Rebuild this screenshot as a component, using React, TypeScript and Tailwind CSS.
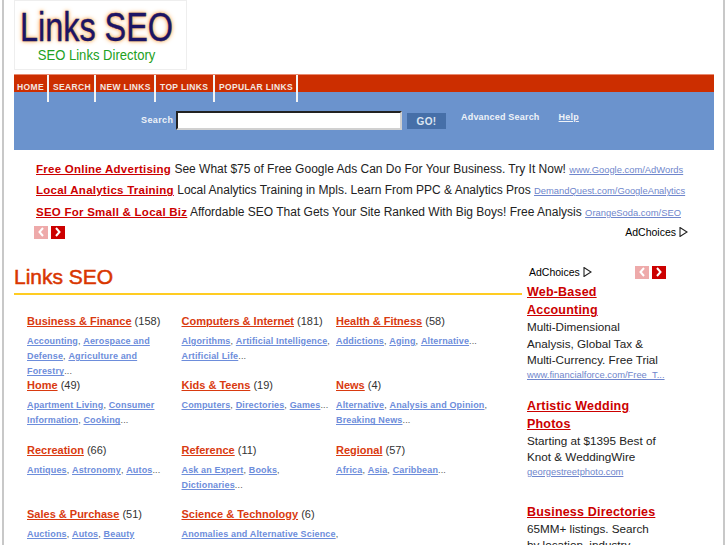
import React from "react";

const sans = { fontFamily: '"Liberation Sans", Arial, sans-serif' };

const nav = [
  ["HOME", "w-[35px]"],
  ["SEARCH", "w-[47px]"],
  ["NEW LINKS", "w-[60px]"],
  ["TOP LINKS", "w-[59px]"],
  ["POPULAR LINKS", "w-[83px]"],
];

const topAds = [
  ["Free Online Advertising", "See What $75 of Free Google Ads Can Do For Your Business. Try It Now!", "www.Google.com/AdWords"],
  ["Local Analytics Training", "Local Analytics Training in Mpls. Learn From PPC & Analytics Pros", "DemandQuest.com/GoogleAnalytics"],
  ["SEO For Small & Local Biz", "Affordable SEO That Gets Your Site Ranked With Big Boys! Free Analysis", "OrangeSoda.com/SEO"],
];

const cats: [string, string, string[][]][] = [
  ["Business & Finance", "(158)", [["Accounting", ", "], ["Aerospace and Defense", ", "], ["Agriculture and Forestry", "..."]]],
  ["Computers & Internet", "(181)", [["Algorithms", ", "], ["Artificial Intelligence", ", "], ["Artificial Life", "..."]]],
  ["Health & Fitness", "(58)", [["Addictions", ", "], ["Aging", ", "], ["Alternative", "..."]]],
  ["Home", "(49)", [["Apartment Living", ", "], ["Consumer Information", ", "], ["Cooking", "..."]]],
  ["Kids & Teens", "(19)", [["Computers", ", "], ["Directories", ", "], ["Games", "..."]]],
  ["News", "(4)", [["Alternative", ", "], ["Analysis and Opinion", ", "], ["Breaking News", "..."]]],
  ["Recreation", "(66)", [["Antiques", ", "], ["Astronomy", ", "], ["Autos", "..."]]],
  ["Reference", "(11)", [["Ask an Expert", ", "], ["Books", ", "], ["Dictionaries", "..."]]],
  ["Regional", "(57)", [["Africa", ", "], ["Asia", ", "], ["Caribbean", "..."]]],
  ["Sales & Purchase", "(51)", [["Auctions", ", "], ["Autos", ", "], ["Beauty", ""]]],
  ["Science & Technology", "(6)", [["Anomalies and Alternative Science", ","]]],
];

function Arrows() {
  return (
    <div className="flex gap-[3px]">
      <span className="flex h-[13px] w-[14px] items-center justify-center bg-[#eeaaaa]">
        <svg width="8" height="10" viewBox="0 0 8 10"><path d="M6 1 2.5 5 6 9" fill="none" stroke="#fff" strokeWidth="2" /></svg>
      </span>
      <span className="flex h-[13px] w-[14px] items-center justify-center bg-[#cc0000]">
        <svg width="8" height="10" viewBox="0 0 8 10"><path d="M2 1 5.5 5 2 9" fill="none" stroke="#fff" strokeWidth="2" /></svg>
      </span>
    </div>
  );
}

function AdChoices() {
  return (
    <span className="flex items-center gap-[3px] text-[10.5px] leading-[12px] text-black">
      AdChoices
      <svg width="9" height="10" viewBox="0 0 9 10"><path d="M1 .5V9.5L8 5Z" fill="none" stroke="#222" strokeWidth="1.1" /></svg>
    </span>
  );
}

function SideAd({ title, lines, url, gap }: { title: string; lines: string; url: string; gap: string }) {
  return (
    <div className={gap}>
      <a className="block text-[12.5px] font-bold leading-[18px] tracking-[0.2px] text-[#cc0000] underline">{title}</a>
      <p className="text-[11.7px] leading-[16.5px] text-[#222]">{lines}</p>
      {url && <a className="-mt-[1px] block text-[9.4px] leading-[13px] text-[#6f86cc] underline">{url}</a>}
    </div>
  );
}

export default function App() {
  return (
    <div className="h-[545px] w-[727px] overflow-hidden bg-white" style={sans}>
      <div className="ml-[2px] h-[545px] w-[723px] border-x-[2px] border-[#c8c8c8] pl-[10px] pr-[9px]">
        <div className="flex h-[70px] w-[173px] flex-col items-center border border-[#eeeeee] bg-white pr-[8px]">
          <div className="mt-[5px] whitespace-nowrap text-[40px] leading-[42px] text-[#1c1464] [-webkit-text-stroke:0.4px_#1c1464] [text-shadow:0_0_6px_#f6a850,0_0_3px_#f6a850] [transform:scaleX(0.81)]">Links SEO</div>
          <div className="mt-[-1px] whitespace-nowrap text-[15px] leading-[16px] text-[#22a022] [transform:scaleX(0.87)]">SEO Links Directory</div>
        </div>
        <div className="mt-[4px] flex h-[18px] border-t border-[#e88a70] bg-[#cc2e00]">
          {nav.map(([t, w]) => (
            <div key={t} className={`relative h-[17px] ${w} whitespace-nowrap pl-[4px] pt-[6px] text-[8.5px] font-bold leading-[12px] tracking-[0.35px] text-[#f5e8e0] first:pl-[3px]`}>
              {t}
              <span className="absolute right-0 top-0 h-[27px] w-[2px] bg-[#f4f4f4]" />
            </div>
          ))}
        </div>
        <div className="flex h-[58px] items-start bg-[#6b93cd] pt-[19px]">
          <span className="ml-[127px] mt-[3px] w-[35px] text-[9px] font-bold leading-[12px] tracking-[0.4px] text-[#eef2f8]">Search</span>
          <div className="h-[19px] w-[226px] border-2 border-b-[#d0d0d0] border-l-[#222] border-r-[#d0d0d0] border-t-[#222] bg-white" />
          <div className="ml-[5px] mt-[2px] flex h-[16px] w-[39px] items-center justify-center bg-[#466fa8] text-[10px] font-bold tracking-[0.3px] text-[#dde6f2]">GO!</div>
          <span className="ml-[15px] text-[9px] font-bold leading-[12px] tracking-[0.2px] text-[#eef2f8]">Advanced Search</span>
          <span className="ml-[19px] text-[9px] font-bold leading-[12px] tracking-[0.2px] text-[#eef2f8] underline">Help</span>
        </div>

        <div className="pl-[22px] pt-[10.5px]">
          {topAds.map(([a, b, c]) => (
            <div key={a} className="h-[21.7px] whitespace-nowrap text-[12px] leading-[17px] text-[#222]">
              <a className="text-[11.5px] font-bold tracking-[0.25px] text-[#cc0000] underline">{a}</a>{" "}
              {b}{" "}
              <a className="text-[9.4px] text-[#6f86cc] underline">{c}</a>
            </div>
          ))}
          <div className="flex h-[18px] items-start justify-between pr-[26px]">
            <div className="-ml-[2px]"><Arrows /></div>
            <AdChoices />
          </div>
        </div>

        <div className="mt-[18.5px] flex">
          <div className="w-[508px] shrink-0">
            <h1 className="h-[30.5px] text-[21px] font-normal leading-[30px] text-[#d93600] [-webkit-text-stroke:0.5px_#d93600]">Links SEO</h1>
            <div className="h-[2px] bg-[#ffcc22]" />
            <div className="grid grid-cols-[154.5px_154.5px_154.5px] pl-[13px] pt-[19px]">
              {cats.map(([title, n, links]) => (
                <div key={title} className="h-[64.5px] pr-[2px]">
                  <div className="whitespace-nowrap text-[11px] leading-[14px] text-[#333]">
                    <a className="font-bold text-[#d93a10] underline">{title}</a> {n}
                  </div>
                  <div className="mt-[6px] text-[9px] font-bold leading-[15.4px] tracking-[0.15px] text-[#555]">
                    {links.map(([l, sep]) => (
                      <React.Fragment key={l}>
                        <a className={`text-[#6d8ddb] underline ${l.length > 30 ? "whitespace-nowrap" : ""}`}>{l}</a>
                        <span className="font-normal">{sep}</span>
                      </React.Fragment>
                    ))}
                  </div>
                </div>
              ))}
            </div>
          </div>
          <div className="ml-[5px] w-[146px] shrink-0">
            <div className="mb-[2px] mt-[1px] flex h-[18px] items-center justify-between pl-[2px] pr-[7px]">
              <AdChoices />
              <Arrows />
            </div>
            <div className="w-[137px]">
              <SideAd title="Web-Based Accounting" lines="Multi-Dimensional Analysis, Global Tax & Multi-Currency. Free Trial" url="www.financialforce.com/Free_T..." gap="mb-[16px]" />
              <SideAd title="Artistic Wedding Photos" lines="Starting at $1395 Best of Knot & WeddingWire" url="georgestreetphoto.com" gap="mb-[25px]" />
              <SideAd title="Business Directories" lines="65MM+ listings. Search by location, industry" url="" gap="" />
            </div>
          </div>
        </div>
      </div>
    </div>
  );
}
